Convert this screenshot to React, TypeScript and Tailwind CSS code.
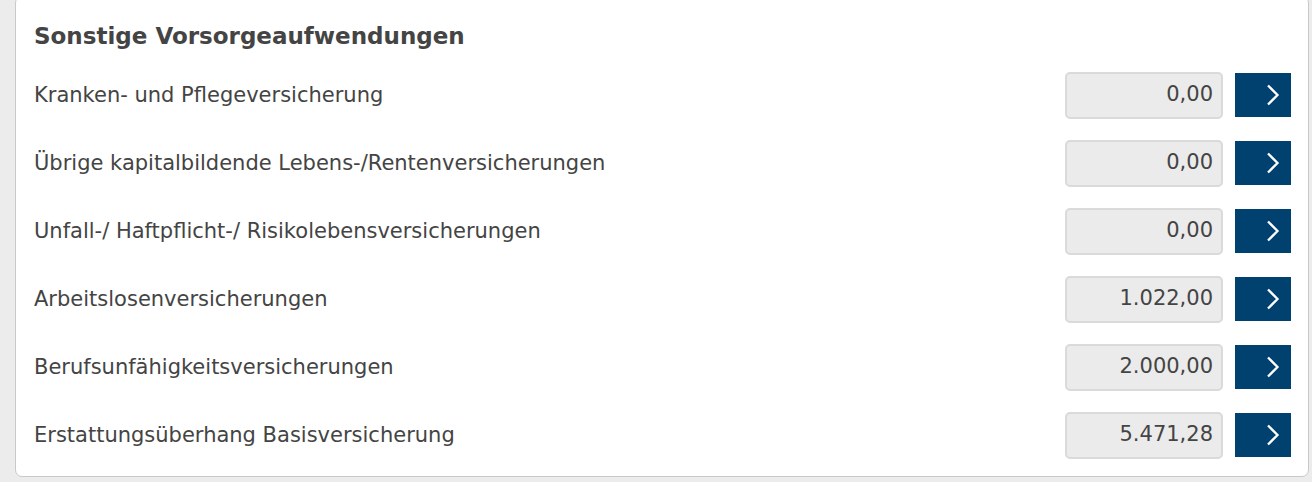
const rows = [
  { label: 'Kranken- und Pflegeversicherung', value: '0,00' },
  { label: 'Übrige kapitalbildende Lebens-/Rentenversicherungen', value: '0,00' },
  { label: 'Unfall-/ Haftpflicht-/ Risikolebensversicherungen', value: '0,00' },
  { label: 'Arbeitslosenversicherungen', value: '1.022,00' },
  { label: 'Berufsunfähigkeitsversicherungen', value: '2.000,00' },
  { label: 'Erstattungsüberhang Basisversicherung', value: '5.471,28' },
];

function Chevron() {
  return (
    <svg width="14" height="22" viewBox="0 0 14 22" className="ml-[19px]">
      <polyline points="2,1.5 11.5,11 2,20.5" fill="none" stroke="#ffffff" strokeWidth="2.3" />
    </svg>
  );
}

export default function App() {
  return (
    <div className="w-[1312px] h-[482px] overflow-hidden bg-[#ececec] font-['DejaVu_Sans',sans-serif] text-[#444444]">
      <div className="ml-[15px] mr-[3px] -mt-[4px] h-[481px] bg-white border border-[#c9c9c9] rounded-[7px] pl-[18px] pr-[17px]">
        <h2 className="pt-[24px] h-[64px] text-[23px] font-bold leading-[30px] text-[#444444]">Sonstige Vorsorgeaufwendungen</h2>
        {rows.map((row) => (
          <div key={row.label} className="h-[68px] flex items-center">
            <div className="flex-1 text-[21px] leading-none">{row.label}</div>
            <div className="w-[158px] h-[47px] rounded-[5px] bg-[#ebebeb] border-2 border-[#dadada] flex items-center justify-end pr-[8px] text-[21px]">
              {row.value}
            </div>
            <button className="ml-[12px] w-[56px] h-[44px] bg-[#01416f] flex items-center justify-center">
              <Chevron />
            </button>
          </div>
        ))}
      </div>
    </div>
  );
}
